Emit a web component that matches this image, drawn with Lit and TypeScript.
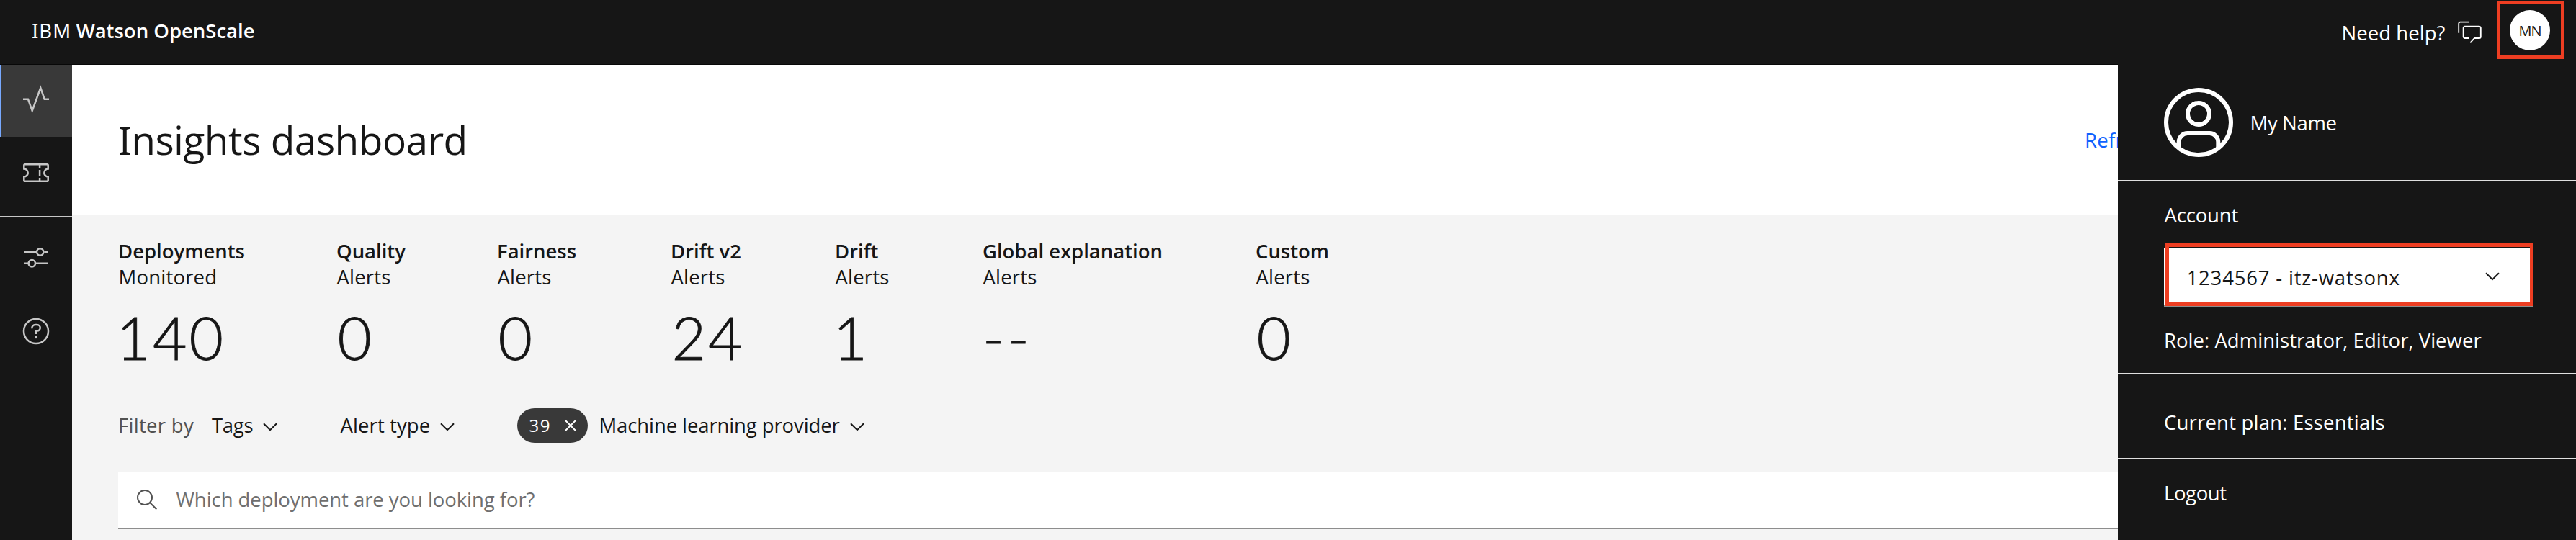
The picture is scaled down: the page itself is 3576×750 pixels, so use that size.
import { LitElement, html, css, svg } from 'lit';
import { customElement } from 'lit/decorators.js';

const stats = [
  { title: 'Deployments', sub: 'Monitored', value: '140', one: true },
  { title: 'Quality', sub: 'Alerts', value: '0' },
  { title: 'Fairness', sub: 'Alerts', value: '0' },
  { title: 'Drift v2', sub: 'Alerts', value: '24' },
  { title: 'Drift', sub: 'Alerts', value: '1', one: true },
  { title: 'Global explanation', sub: 'Alerts', value: '--', none: true },
  { title: 'Custom', sub: 'Alerts', value: '0' },
];

const chevron = html`<svg class="chevron" viewBox="0 0 20 12" width="20" height="12">
  <path d="M1 1.2 10 10.2 19 1.2" fill="none" stroke="#161616" stroke-width="2" />
</svg>`;

const navIcons = {
  activity: svg`<path d="M32 137.7h6.9l5.8 16.1L56.3 122l5.4 15.7H68" transform="translate(-30 -118)" />`,
  ticket: svg`<g transform="translate(2 7)">
    <path d="M1.3 2.6c0-.8.5-1.3 1.3-1.3h30.8c.8 0 1.3.5 1.3 1.3v5a5.4 5.4 0 0 0 0 10.8v5c0 .8-.5 1.3-1.3 1.3H2.6c-.8 0-1.3-.5-1.3-1.3v-5a5.4 5.4 0 0 0 0-10.8z" />
    <path d="M23.1 1.5v4.5M23.1 9v8.2M23.1 20v4.5" />
  </g>`,
  adjust: svg`<path d="M4 12h16.5M31.3 12H36M4 27.7h5.1M19.7 27.7H36" />
    <circle cx="25.7" cy="12" r="4.7" /><circle cx="14.3" cy="27.7" r="4.7" />`,
  help: svg`<circle cx="20" cy="20" r="17" />
    <path d="M14.3 16.2v-.5a4.6 4.6 0 0 1 4.6-4.6h2.6a4.1 4.1 0 0 1 0 8.5H20v4.4" />
    <circle cx="20" cy="28.3" r="1.9" fill="#c6c6c6" stroke="none" />`,
};

@customElement('side-nav')
export class SideNav extends LitElement {
  static styles = css`
    :host { display: flex; flex-direction: column; width: 100px; background: #161616; }
    .item { box-sizing: border-box; height: 100px; display: flex; align-items: center; justify-content: center; }
    .active { background: #393939; box-shadow: inset 2px 0 #78a9ff; }
    .active svg { margin-top: -4px; }
    .divider { height: 2px; background: #c6c6c6; margin: 10px 0 6px; }
    .help { margin-top: 2px; }
    svg { fill: none; stroke: #c6c6c6; stroke-width: 2.5; }
  `;
  icon(name: keyof typeof navIcons) {
    return html`<svg width="40" height="40" viewBox="0 0 40 40">${navIcons[name]}</svg>`;
  }
  render() {
    return html`
      <div class="item active">${this.icon('activity')}</div>
      <div class="item">${this.icon('ticket')}</div>
      <div class="divider"></div>
      <div class="item">${this.icon('adjust')}</div>
      <div class="item help">${this.icon('help')}</div>
    `;
  }
}

@customElement('account-panel')
export class AccountPanel extends LitElement {
  static styles = css`
    :host { display: block; background: #161616; color: #fff; line-height: 36px; white-space: nowrap; }
    section { box-sizing: border-box; padding-left: 64px; border-bottom: 2px solid #e0e0e0; }
    .user { height: 163px; display: flex; padding-top: 33px; }
    .avatar { display: block; width: 96px; height: 96px; }
    .name { margin: 31px 0 0 23.5px; letter-spacing: -0.35px; }
    .account { height: 268px; padding-top: 29px; }
    .label { letter-spacing: -0.17px; padding-left: 0.5px; }
    .select { box-sizing: border-box; position: relative; width: 512px; height: 82px; margin-top: 27px;
      background: #fff; border-bottom: 2px solid #8d8d8d; color: #161616; display: flex;
      align-items: center; justify-content: space-between; padding: 4px 46px 0 31.5px; letter-spacing: 0.82px; }
    .mark { position: absolute; left: 1.5px; top: -6px; width: 511px; height: 87px; box-sizing: border-box; border: 5px solid #ee3e22; }
    .select .chevron { margin-top: -4px; }
    .role { margin-top: 29px; letter-spacing: 0.03px; }
    .plan { height: 118px; padding-top: 49px; letter-spacing: 0.2px; }
    .logout { border: 0; padding-top: 29px; letter-spacing: -0.4px; }
  `;
  render() {
    return html`
      <section class="user">
        <svg class="avatar" viewBox="-48 -48 96 96" fill="none" stroke="#fff" stroke-width="6">
          <circle r="45" /><circle cy="-12" r="15" />
          <path d="M-27.3 36V27a12 12 0 0 1 12-12h30.6a12 12 0 0 1 12 12v9" />
        </svg>
        <div class="name">My Name</div>
      </section>
      <section class="account">
        <div class="label">Account</div>
        <div class="select"><span>1234567 - itz-watsonx</span>${chevron}<div class="mark"></div></div>
        <div class="role">Role: Administrator, Editor, Viewer</div>
      </section>
      <section class="plan">Current plan: Essentials</section>
      <section class="logout">Logout</section>
    `;
  }
}

@customElement('app-root')
export class AppRoot extends LitElement {
  static styles = css`
    :host { display: block; position: relative; width: 3576px; height: 750px; overflow: hidden;
      background: #f4f4f4; color: #161616; font: 27.5px/36px "Open Sans", sans-serif; white-space: nowrap; }
    header { box-sizing: border-box; height: 90px; background: #161616; border-bottom: 1px solid #080808;
      color: #fff; display: flex; justify-content: space-between; padding: 0 16px 0 44px; }
    .brand { margin-top: 25px; }
    .ibm { font-family: "Noto Sans", sans-serif; letter-spacing: 1px; }
    .product { font-weight: 600; letter-spacing: 0; margin-left: 6.5px; }
    .tools { display: flex; align-items: flex-start; }
    .need { margin-top: 28px; letter-spacing: 0.04px; }
    .chat { margin: 28px 21px 0 16px; }
    .frame { box-sizing: border-box; width: 94.5px; height: 81.5px; border: 5px solid #ee3e22; margin-top: 0.5px;
      display: flex; align-items: flex-start; justify-content: center; padding: 8.5px 1.5px 0 0; }
    .badge { width: 56px; height: 56px; border-radius: 50%; background: #fff; color: #161616;
      font-size: 20px; line-height: 58px; text-align: center; letter-spacing: -0.9px; }
    .body { display: flex; height: 660px; }
    main { flex: 1; min-width: 0; }
    .top { box-sizing: border-box; height: 208px; background: #fff; display: flex; padding-left: 64px; }
    h1 { margin: 68px 0 0; width: 2730px; font-size: 55px; line-height: 72px; font-weight: 400; letter-spacing: -0.5px; }
    h1::first-letter { font-family: "Noto Sans", sans-serif; }
    .refresh { margin-top: 87px; color: #0f62fe; letter-spacing: 0.3px; }
    .content { padding: 33px 0 0 64px; }
    .stats { display: grid; grid-template-columns: 303px 223px 241px 228px 205px 379px auto; }
    .title { font-weight: 600; letter-spacing: -0.02px; }
    .sub { letter-spacing: 0.2px; padding-left: 0.5px; }
    .value { margin: 15px 0 0 1.5px; font: 300 82px/100px Lato, sans-serif; letter-spacing: 3px;
      -webkit-text-stroke: 0.9px #161616; }
    .one { margin-left: -2.5px; }
    .none { letter-spacing: 4.2px; margin-left: 0; }
    .filters { display: flex; align-items: center; height: 48px; margin-top: 49px; }
    .by { color: #525252; letter-spacing: 0.31px; width: 130px; }
    .chevron { margin-left: 15px; }
    .filters .chevron { margin-left: 14px; position: relative; top: -2px; }
    .tags { width: 178.5px; letter-spacing: -0.29px; }
    .type { width: 245.5px; letter-spacing: 0.1px; }
    .pill { box-sizing: border-box; width: 98px; height: 48px; border-radius: 24px; background: #393939; color: #fff;
      display: flex; align-items: center; justify-content: space-between; padding: 0 16px 0 16.5px;
      margin-right: 15.5px; font-size: 24px; letter-spacing: 1.5px; }
    .provider { letter-spacing: -0.11px; }
    .search { box-sizing: border-box; height: 80px; margin-top: 40px; background: #fff; border-bottom: 2px solid #8d8d8d;
      display: flex; align-items: center; padding-left: 26px; color: #6f6f6f; letter-spacing: -0.06px; }
    .glass { margin-right: 26.5px; }
    account-panel { position: absolute; left: 2940px; top: 89px; width: 636px; height: 661px; }
  `;
  render() {
    return html`
      <header>
        <div class="brand"><span class="ibm">IBM</span><span class="product">Watson OpenScale</span></div>
        <div class="tools">
          <span class="need">Need help?</span>
          <svg class="chat" width="34" height="34" viewBox="0 0 34 34" fill="none" stroke="#fff" stroke-width="1.8">
            <path d="M17 2.7H4.2a2 2 0 0 0-2 2v13" />
            <path d="M17 25h-6.4a2 2 0 0 1-2-2V10.7a2 2 0 0 1 2-2h20.2a2 2 0 0 1 2 2V23a2 2 0 0 1-2 2h-6.8l-5.7 6.3" />
          </svg>
          <div class="frame"><div class="badge">MN</div></div>
        </div>
      </header>
      <div class="body">
        <side-nav></side-nav>
        <main>
          <div class="top"><h1>Insights dashboard</h1><span class="refresh">Refresh</span></div>
          <div class="content">
            <div class="stats">
              ${stats.map((s) => html`<div>
                <div class="title">${s.title}</div>
                <div class="sub">${s.sub}</div>
                <div class="value ${s.one ? 'one' : ''} ${s.none ? 'none' : ''}">${s.value}</div>
              </div>`)}
            </div>
            <div class="filters">
              <span class="by">Filter by</span>
              <span class="tags">Tags${chevron}</span>
              <span class="type">Alert type${chevron}</span>
              <span class="pill">39<svg width="16" height="16" viewBox="0 0 16 16">
                <path d="M1 1 15 15M15 1 1 15" stroke="#fff" stroke-width="2" /></svg></span>
              <span class="provider">Machine learning provider${chevron}</span>
            </div>
            <div class="search">
              <svg class="glass" width="28" height="28" viewBox="0 0 28 28" fill="none" stroke="#525252" stroke-width="2">
                <circle cx="11" cy="11" r="10" /><path d="M18 18 27.3 27.3" />
              </svg>
              <span>Which deployment are you looking for?</span>
            </div>
          </div>
        </main>
      </div>
      <account-panel></account-panel>
    `;
  }
}
